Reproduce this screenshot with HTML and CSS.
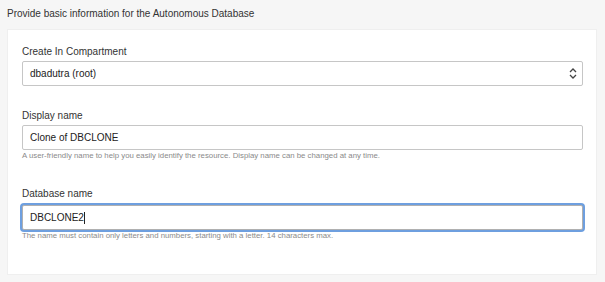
FILE: index.html
```html
<!DOCTYPE html>
<html lang="en">
  <head>
    <meta charset="UTF-8" />
    <meta name="viewport" content="width=device-width, initial-scale=1.0" />
    <title>Clone Autonomous Database</title>
    <link rel="stylesheet" href="styles.css">
  </head>
  <body>
    <div class="container">
      <h2 class="section-title">Provide basic information for the Autonomous Database</h2>

      <div class="panel">
        <div class="field field-compartment">
          <label class="field-label">Create In Compartment</label>
          <div class="control select">
            <span class="control-value">dbadutra (root)</span>
            <svg class="select-arrows" width="8" height="11" viewBox="0 0 8 11">
              <path d="M1 4 L4 1 L7 4" />
              <path d="M1 7 L4 10 L7 7" />
            </svg>
          </div>
        </div>

        <div class="field">
          <label class="field-label">Display name</label>
          <div class="control">
            <span class="control-value">Clone of DBCLONE</span>
          </div>
          <p class="field-help">A user-friendly name to help you easily identify the resource. Display name can be changed at any time.</p>
        </div>

        <div class="field">
          <label class="field-label">Database name</label>
          <div class="control focused">
            <span class="control-value">DBCLONE2</span><span class="caret"></span>
          </div>
          <p class="field-help">The name must contain only letters and numbers, starting with a letter. 14 characters max.</p>
        </div>
      </div>
    </div>
  </body>
</html>
```

FILE: styles.css
```css
:root {
  --text-color: #333;
  --border-color: #c6c6c6;
  --focus-color: #6e9fdf;
}

* {
  margin: 0;
  padding: 0;
  box-sizing: border-box;
}

body {
  font-family: "Liberation Sans", Arial, sans-serif;
  color: var(--text-color);
  background-color: #f6f6f6;
}

.container {
  padding: 7px 8px 0 7px;
}

.section-title {
  font-size: 10px;
  font-weight: normal;
  line-height: 14px;
  color: #333;
  margin-bottom: 8px;
}

.panel {
  background-color: white;
  border: 1px solid #efefef;
  height: 246px;
  padding: 13px 13px 0 14px;
}

.field {
  margin-bottom: 25px;
}

.field-compartment {
  margin-bottom: 21px;
}

.field-label {
  display: block;
  font-size: 10px;
  line-height: 14px;
  color: #333;
  padding-top: 2px;
  margin-bottom: 2px;
}

.control {
  display: flex;
  align-items: center;
  height: 25px;
  padding: 0 7px;
  border: 1px solid var(--border-color);
  border-radius: 2px;
  background-color: white;
}

.control-value {
  font-size: 10px;
  color: #222;
}

.select {
  justify-content: space-between;
  padding-right: 5px;
}

.select-arrows path {
  fill: none;
  stroke: #444;
  stroke-width: 1.3;
}

.focused {
  margin-top: 4px;
  border-color: #b0b0b0;
  box-shadow: 0 0 0 2px var(--focus-color);
}

.caret {
  display: inline-block;
  width: 1px;
  height: 12px;
  background-color: #222;
}

.field-help {
  font-size: 7.8px;
  line-height: 10px;
  color: #8a8a8a;
  margin-top: 1px;
  margin-bottom: -1px;
}
```
